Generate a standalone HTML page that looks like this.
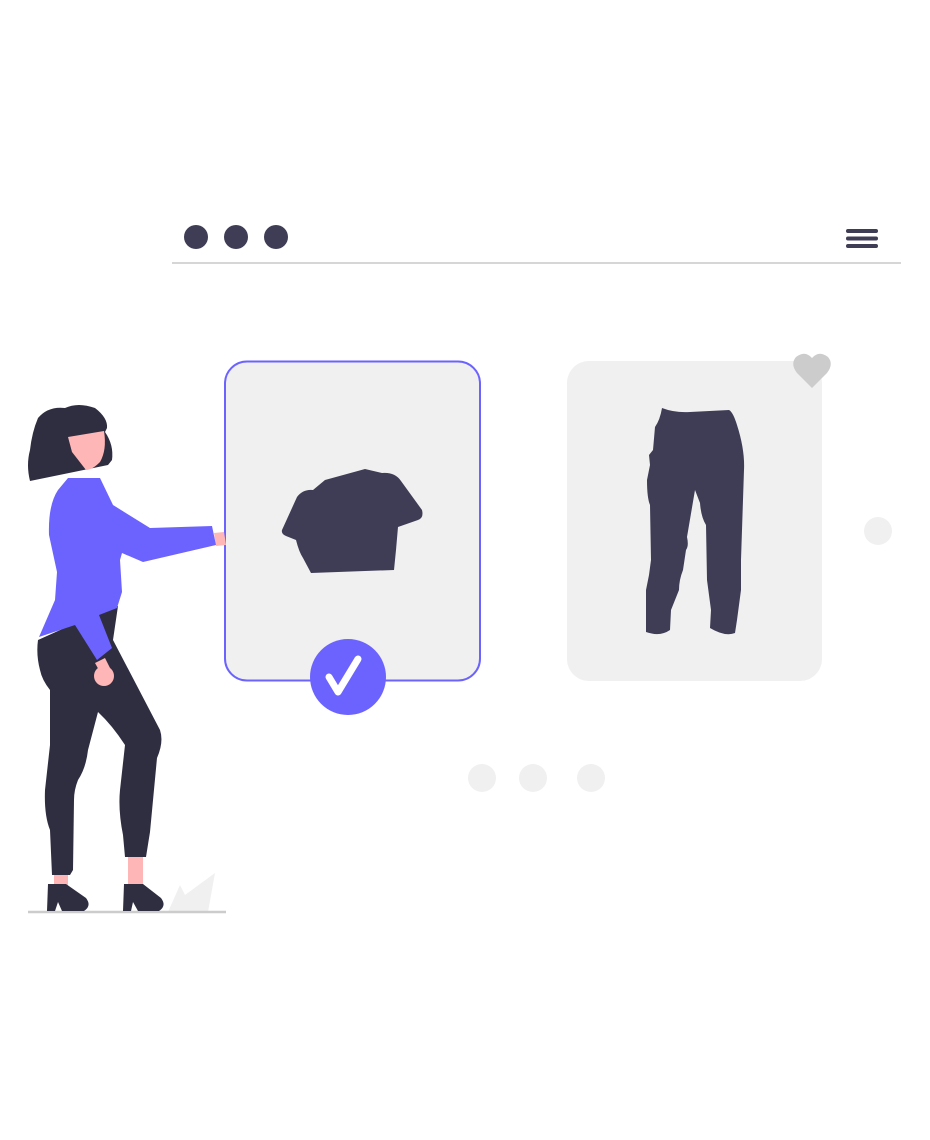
<!DOCTYPE html>
<html><head><style>html,body{margin:0;padding:0;background:#fff;}svg{display:block}</style></head>
<body>
<svg width="930" height="1140" viewBox="0 0 930 1140" xmlns="http://www.w3.org/2000/svg">
<rect width="930" height="1140" fill="#fff"/>
<!-- browser -->
<circle cx="196" cy="237" r="12" fill="#3f3d56"/>
<circle cx="236" cy="237" r="12" fill="#3f3d56"/>
<circle cx="276" cy="237" r="12" fill="#3f3d56"/>
<line x1="172" y1="263" x2="901" y2="263" stroke="#d6d6d6" stroke-width="2"/>
<g stroke="#3f3d56" stroke-width="4" stroke-linecap="round">
<line x1="848" y1="231" x2="876" y2="231"/><line x1="848" y1="238.5" x2="876" y2="238.5"/><line x1="848" y1="246" x2="876" y2="246"/>
</g>
<!-- cards -->
<rect x="225" y="361.5" width="255" height="319" rx="22" fill="#f0f0f0" stroke="#6c63ff" stroke-width="2"/>
<rect x="567" y="361" width="255" height="320" rx="22" fill="#f0f0f0"/>
<path d="M282,530 L297,497 Q303,489 313,490 L325,480 L365,469 L382,473 Q395,472 401,481 L422,510 Q424,518 418,520 L398,527 L396,550 L394,570 L311,573 L303,558 Q299,552 296,540 L286,536 Q281,534 282,530Z" fill="#3f3d56"/>
<path d="M662,408 Q675,413 690,412 L729,410 Q733,412 737,425 Q745,450 744,470 L741,560 L741,590 L737,620 L735,633 Q725,637 710,628 L711,610 L707,580 L706,525 Q701,517 700,503 L695,490 L687,537 Q689,546 686,550 L683,570 Q679,580 679,590 L671,610 L670,630 Q660,637 646,632 L646,590 L649,575 L651,560 L650,505 Q647,498 647,480 L650,465 L649,455 L653,450 L655,427 Q660,420 662,408Z" fill="#3f3d56"/>
<path d="M812,388 L797,373 Q790,364 796,357 Q805,350 812,358 Q819,350 828,357 Q834,364 827,373Z" fill="#ccc"/>
<circle cx="878" cy="531" r="14" fill="#f0f0f0"/>
<circle cx="482" cy="778" r="14" fill="#f0f0f0"/>
<circle cx="533" cy="778" r="14" fill="#f0f0f0"/>
<circle cx="591" cy="778" r="14" fill="#f0f0f0"/>
<circle cx="348" cy="677" r="38" fill="#6c63ff"/>
<path d="M329,677 L338,692 L358,659" fill="none" stroke="#fff" stroke-width="7" stroke-linecap="round" stroke-linejoin="round"/>
<!-- plant & ground -->
<path d="M168,912 L180,885 L185,895 L215,873 L208,912Z" fill="#f0f0f0"/>
<line x1="28" y1="912" x2="226" y2="912" stroke="#ccc" stroke-width="2.5"/>
<!-- woman -->
<path d="M214,533 L224,532 L226,545 L216,546Z" fill="#ffb6b6"/>
<rect x="54" y="870" width="14" height="16" fill="#ffb6b6"/>
<rect x="128" y="852" width="15" height="34" fill="#ffb6b6"/>
<path d="M48,884 L66,884 L86,898 Q92,906 84,911 L62,911 L58,902 L55,911 L47,911Z" fill="#2f2e41"/>
<path d="M124,884 L143,884 L161,898 Q167,906 159,911 L138,911 L133,902 L131,911 L123,911Z" fill="#2f2e41"/>
<path d="M38,640 L100,612 L118,606 L113,640 L160,730 Q164,742 157,758 L150,832 L146,857 L125,857 L123,835 Q118,810 120,790 L125,745 Q112,725 98,712 L88,750 Q86,768 78,780 Q74,790 74,800 L73,870 L70,875 L52,875 L50,830 Q44,815 45,790 L50,745 L50,690 Q42,680 40,670 Q36,655 38,640Z" fill="#2f2e41"/>
<path d="M30,481 Q26,465 30,450 Q32,432 38,418 Q48,406 65,408 Q78,402 95,408 Q108,418 107,428 L105,432 Q114,445 112,460 L108,465 Z" fill="#2f2e41"/>
<path d="M68,437 L104,431 Q107,450 100,462 Q92,470 86,470 L72,452Z" fill="#ffb6b6"/>
<path d="M68,478 L100,478 L113,505 L150,528 L212,526 L216,545 L143,562 L122,553 L120,560 L122,592 L117,608 L99,615 L112,648 L97,660 L75,625 L39,637 L55,600 L57,572 L49,535 Q48,505 58,490Z" fill="#6c63ff"/>
<circle cx="104" cy="676" r="10" fill="#ffb6b6"/>
<path d="M95,663 L105,658 L110,668 L100,672Z" fill="#ffb6b6"/>
</svg>
</body></html>
